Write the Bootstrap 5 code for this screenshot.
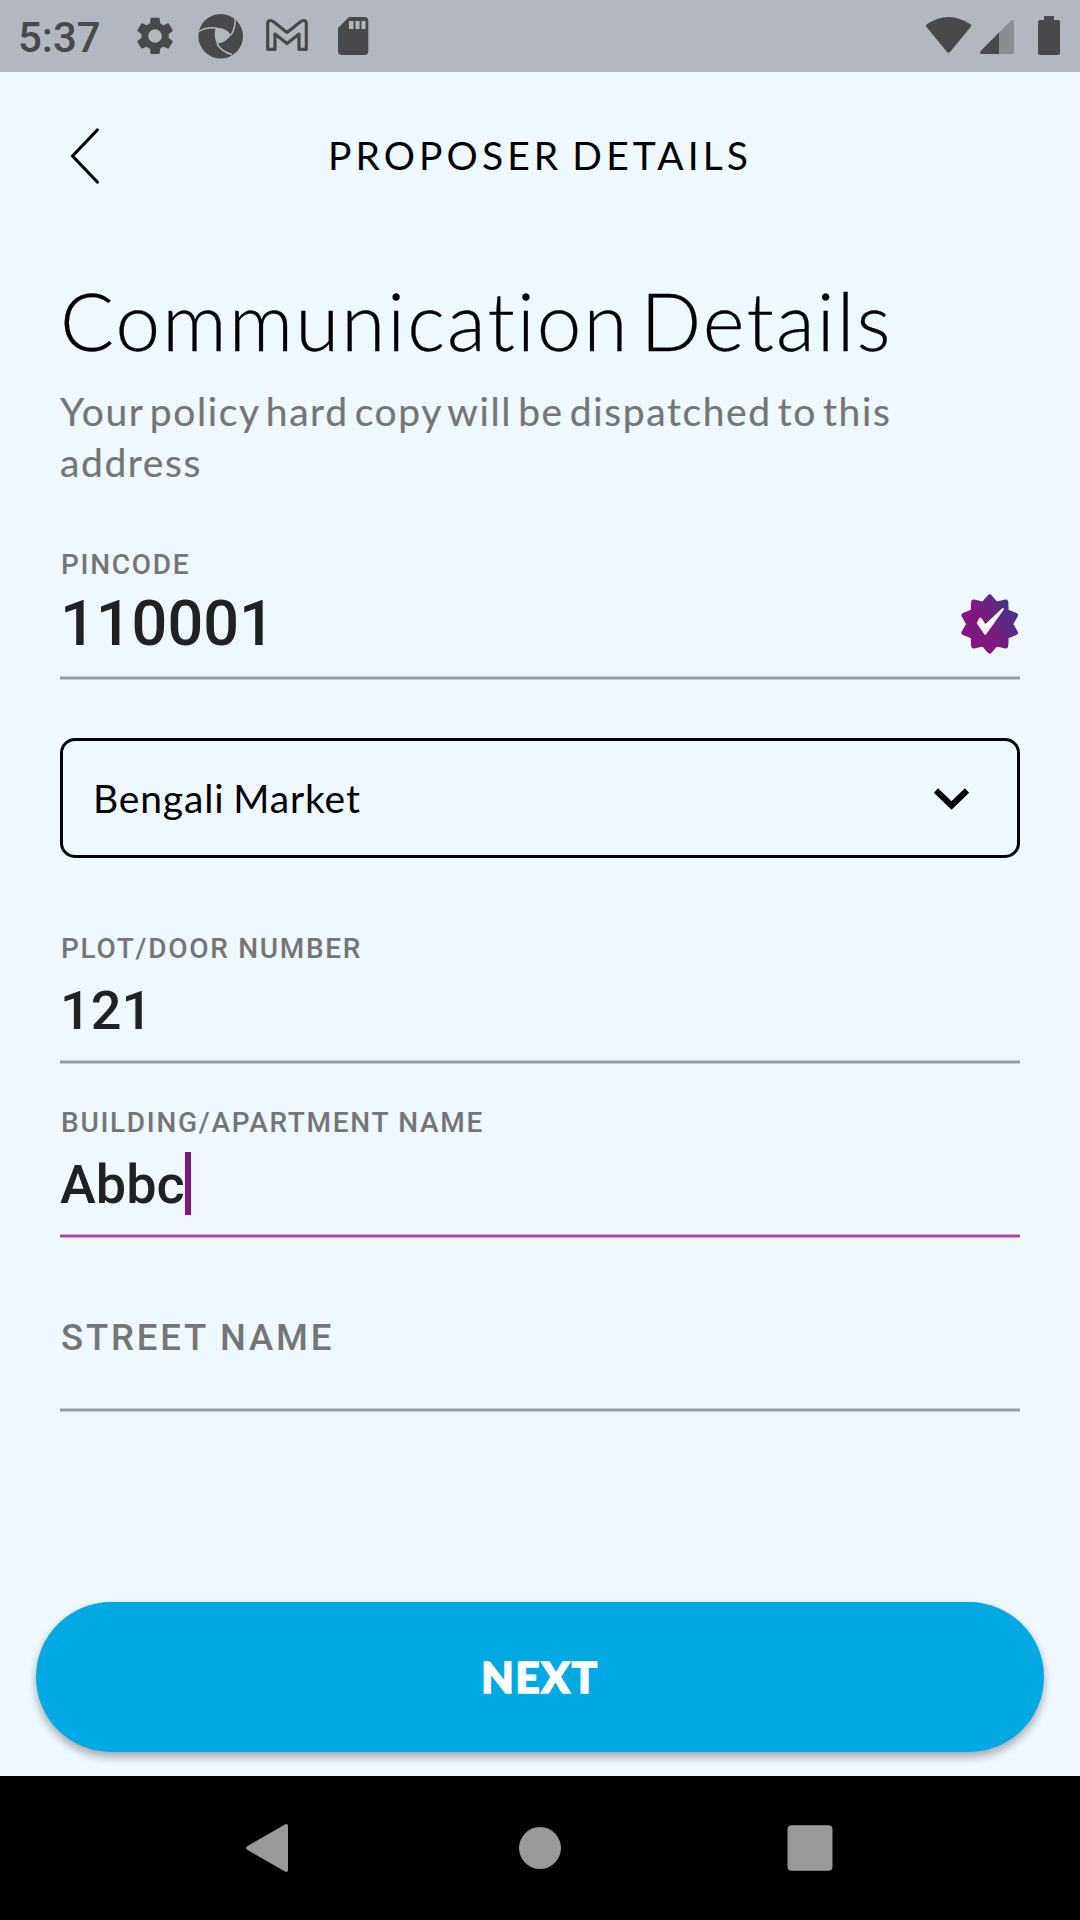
<!DOCTYPE html>
<html lang="en">
<head>
<meta charset="utf-8">
<meta name="viewport" content="width=device-width, initial-scale=1">
<title>Proposer Details</title>
<link rel="stylesheet" href="https://cdn.jsdelivr.net/npm/bootstrap@5.3.0/dist/css/bootstrap.min.css">
<style>
  body { background: #eff7ff; font-family: Lato, "Open Sans", sans-serif; color: #000; font-variant-ligatures: none; }
  .screen { width: 1080px; height: 1920px; overflow: hidden; }
  svg { display: block; flex: none; }
  .statusbar { height: 72px; background: #b3b8c0; }
  .clock { font: 500 42px/72px Roboto, sans-serif; color: #48494b; width: 116px; padding: 2px 0 0 18px; height: 72px; }
  .topbar { height: 168px; padding-left: 60px; }
  .topbar-title { font-size: 39px; line-height: 50px; letter-spacing: 4.1px; word-spacing: -4px; width: 960px; margin: -2px 0 0 -50px; }
  .content { padding: 0 60px; }
  .headline { font-size: 80px; font-weight: 300; line-height: 100px; letter-spacing: 2.1px; word-spacing: -13px; margin: 30px 0 0; white-space: nowrap; -webkit-text-stroke: .3px #000; }
  .subline { font-size: 39px; line-height: 51px; letter-spacing: 1.6px; word-spacing: -5.500px; color: #757575; margin: 16px 0 0; height: 102px; white-space: nowrap; -webkit-text-stroke: .2px #757575; }
  .field { height: 140px; padding-top: 7px; font-family: Roboto, sans-serif; font-weight: 500; }
  .field-pin { margin-top: 52px; }
  .field-plot { margin-top: 66px; }
  .field-next { margin-top: 34px; }
  .field-label { font-size: 28px; line-height: 34px; height: 34px; padding: 1px 0 0 1px; letter-spacing: 1.7px; color: #757575; }
  .field-value { font-size: 54px; line-height: 91px; height: 88px; color: #202122; }
  .field-value-lg { font-size: 63px; line-height: 85px; }
  .field-placeholder { font-size: 36.5px; line-height: 40px; letter-spacing: 2.8px; color: #757575; padding: 39px 0 0 1px; }
  .rule { height: 4px; background: #999a9c; border: solid #c4c9ce; border-width: 1px 0; }
  .rule-active { background: #ab47a8; border-color: #cf9fd6; }
  .caret { width: 6px; height: 63px; background: #7f187f; margin-top: 13px; }
  .picker { height: 120px; margin-top: 58px; border: 3px solid #000; border-radius: 15px; padding: 0 46px 0 30px; font-size: 39px; letter-spacing: .85px; word-spacing: -2px; }
  .next-btn { height: 150px; width: 1008px; border: 0; border-radius: 75px; background: #00a9e2; color: #fff; font-size: 42px; font-weight: 900; letter-spacing: 1.8px; -webkit-text-stroke: 1.6px #fff; box-shadow: 0 5px 9px rgba(0,0,0,.32); }
  .next-wrap { height: 174px; }
  .navkeys { height: 144px; background: #000; }
</style>
</head>
<body>
<div class="screen d-flex flex-column">
  <header class="statusbar d-flex flex-shrink-0">
    <div class="clock">5:37</div>
    <svg width="284" height="72" viewBox="116 0 284 72" fill="#48494b">
      <!-- settings -->
      <g transform="translate(132.4 13.3) scale(1.89)"><path d="M19.14 12.94c.04-.3.06-.61.06-.94 0-.32-.02-.64-.07-.94l2.03-1.58a.49.49 0 0 0 .12-.61l-1.92-3.32a.488.488 0 0 0-.59-.22l-2.39.96c-.5-.38-1.03-.7-1.62-.94l-.36-2.54a.484.484 0 0 0-.48-.41h-3.84c-.24 0-.43.17-.47.41l-.36 2.54c-.59.24-1.13.57-1.62.94l-2.39-.96c-.22-.08-.47 0-.59.22L2.74 8.87c-.12.21-.08.47.12.61l2.03 1.58c-.05.3-.09.63-.09.94s.02.64.07.94l-2.03 1.58a.49.49 0 0 0-.12.61l1.92 3.32c.12.22.37.29.59.22l2.39-.96c.5.38 1.03.7 1.62.94l.36 2.54c.05.24.24.41.48.41h3.84c.24 0 .44-.17.47-.41l.36-2.54c.59-.24 1.13-.56 1.62-.94l2.39.96c.22.08.47 0 .59-.22l1.92-3.32c.12-.22.07-.47-.12-.61zM12 15.6A3.6 3.6 0 1 1 12 8.4a3.6 3.6 0 0 1 0 7.2z"/></g>
      <!-- shutter -->
      <circle cx="220.700" cy="36.300" r="22.300"/>
      <path fill="#b3b8c0" d="M215.500 28.500Q225 26.500 231 35Q226.500 42 217 44Q213.500 37 215.500 28.500Z"/>
      <g fill="none" stroke="#b3b8c0" stroke-width="1.500"><path d="M198 32Q207 26 218 28.500M235 18Q236 27 231 35M217 44Q222 52 232 54.500"/></g>
      <path fill="#b3b8c0" d="M227 59L237 52L240 56L229 60Z"/>
      <!-- mail -->
      <path fill="none" stroke="#48494b" stroke-width="3.200" stroke-linejoin="round" d="M267.700 49.300V23.500Q267.700 20.500 270.500 20.500Q272 20.500 273.500 21.800L287 32.500L300.500 21.800Q302 20.500 303.500 20.500Q306.300 20.500 306.300 23.500V49.300H299V34L287 43.500L275 34V49.300Z"/>
      <!-- sd card -->
      <path fill-rule="evenodd" d="M349 17H364.500Q368.300 17 368.300 21V51Q368.300 55 364.500 55H342Q338 55 338 51V28ZM349 21V29H353.500V21ZM355.500 21V29H359.500V21ZM361.500 21V29H365.500V21Z"/>
    </svg>
    <svg class="ms-auto" width="180" height="72" viewBox="900 0 180 72" fill="#48494b">
      <path d="M926.300 24.500Q948.500 9.500 970.800 24.500Q971.800 25.500 970.800 26.800L950 52Q948.500 53.500 947 52L926.300 26.800Q925.300 25.500 926.300 24.500Z"/>
      <path fill="#878d91" d="M1011.200 20.500Q1014 18.500 1014 22V51.500Q1014 54 1011.500 54H999V32.500Z"/>
      <path d="M999 32.500V54H981.500Q979 53.500 980.700 51Z"/>
      <path d="M1044 16H1054V20H1058Q1060 20 1060 22V53Q1060 55 1058 55H1040Q1038 55 1038 53V22Q1038 20 1040 20H1044Z"/>
    </svg>
  </header>

  <nav class="topbar d-flex align-items-center flex-shrink-0">
    <svg width="50" height="60" viewBox="60 126 50 60"><path d="M97.300 130L72.500 156L97.300 182" fill="none" stroke="#000" stroke-width="3.200" stroke-linecap="round" stroke-linejoin="round"/></svg>
    <div class="topbar-title text-center">PROPOSER DETAILS</div>
  </nav>

  <main class="content flex-grow-1">
    <h1 class="headline">Communication Details</h1>
    <p class="subline">Your policy hard copy will be dispatched to this<br>address</p>

    <section class="field field-pin d-flex flex-column">
      <div class="field-label">PINCODE</div>
      <div class="field-value field-value-lg d-flex justify-content-between">
        <span>110001</span>
        <svg width="60" height="85" viewBox="960 581 60 85">
          <defs><linearGradient id="seal" x1="0" y1=".75" x2="1" y2=".1"><stop offset=".4" stop-color="#80197f"/><stop offset=".95" stop-color="#443489"/></linearGradient></defs>
          <path fill="url(#seal)" stroke="url(#seal)" stroke-width="5" stroke-linejoin="round" d="M989.700 597L996.200 604.300L1005.800 602L1006.200 611.600L1015.500 615.300L1010.500 624L1015.500 632.700L1006.200 636.400L1005.800 646L996.200 643.700L989.700 651L983.200 643.700L973.600 646L973.200 636.400L963.900 632.700L968.900 624L963.900 615.300L973.200 611.600L973.600 602L983.200 604.300Z"/>
          <path fill="#fff" d="M979.800 617.500Q981 617.200 982 619L985.500 624L1002 608.500Q1004 607.200 1003.800 609.500L986 634.500Q985 635.500 984.200 634L977.200 624Q976.700 623 977.200 622Z"/>
        </svg>
      </div>
      <div class="rule mt-auto"></div>
    </section>

    <section class="picker d-flex align-items-center justify-content-between">
      <span>Bengali Market</span>
      <svg width="40" height="30" viewBox="931 783 40 30"><path d="M936 790.500L951.500 805.500L967 790.500" fill="none" stroke="#000" stroke-width="6"/></svg>
    </section>

    <section class="field field-plot d-flex flex-column">
      <div class="field-label">PLOT/DOOR NUMBER</div>
      <div class="field-value">121</div>
      <div class="rule mt-auto"></div>
    </section>
    <section class="field field-next d-flex flex-column">
      <div class="field-label">BUILDING/APARTMENT NAME</div>
      <div class="field-value d-flex"><span>Abbc</span><span class="caret"></span></div>
      <div class="rule rule-active mt-auto"></div>
    </section>
    <section class="field field-next d-flex flex-column">
      <div class="field-placeholder">STREET NAME</div>
      <div class="rule mt-auto"></div>
    </section>
  </main>

  <div class="next-wrap flex-shrink-0 text-center">
    <button class="btn next-btn p-0" type="button">NEXT</button>
  </div>

  <footer class="navkeys flex-shrink-0">
    <svg width="1080" height="144" viewBox="0 1776 1080 144" fill="#999">
      <path d="M285 1824.500Q288 1823 288 1826.500V1869.500Q288 1873 285 1871.500L247.500 1850Q244.500 1848 247.500 1846Z"/>
      <circle cx="540" cy="1848" r="21"/>
      <rect x="787.500" y="1825.300" width="45" height="45.400" rx="4"/>
    </svg>
  </footer>
</div>
<script src="https://cdn.jsdelivr.net/npm/bootstrap@5.3.0/dist/js/bootstrap.bundle.min.js"></script>
</body>
</html>
